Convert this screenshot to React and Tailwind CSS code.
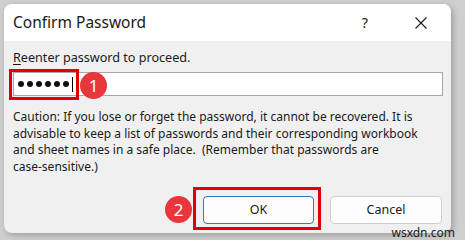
import React from "react";

const font = { fontFamily: '"Noto Sans", "Open Sans", sans-serif' };

const Badge = ({ n, className }) => (
  <div
    className={`absolute w-[27px] h-[27px] rounded-full bg-[#e8363b] text-white flex items-center justify-center text-[17px] leading-none ${className}`}
  >
    {n}
  </div>
);

export default function App() {
  const dots = [0, 1, 2, 3, 4, 5];
  return (
    <div
      className="w-[465px] h-[240px] bg-[#cfcfcf] pt-[4px] pl-[4px] relative overflow-hidden"
      style={font}
    >
      <div className="w-[447px] h-[229px] rounded-[8px] bg-[#f0f0f0] overflow-hidden flex flex-col shadow-[2px_2px_6px_rgba(0,0,0,0.25)]">
        <div className="h-[37px] bg-white flex items-center pl-[9px] pr-[24px] shrink-0">
          <span className="text-[15.5px] text-[#1a1a1a]">Confirm Password</span>
          <span className="ml-auto text-[14.5px] text-[#1a1a1a]">?</span>
          <svg className="ml-[47px]" width="12" height="12" viewBox="0 0 12 12">
            <path d="M0.5 0.5L11.5 11.5M11.5 0.5L0.5 11.5" stroke="#1a1a1a" strokeWidth="1.1" />
          </svg>
        </div>
        <div className="flex flex-col pl-[9px] pr-[8px] pt-[9px] text-[12px] text-[#1a1a1a]">
          <div className="leading-[16px] text-[12.6px]">
            <span className="underline underline-offset-2">R</span>eenter password to proceed.
          </div>
          <div className="mt-[6px] h-[24px] bg-white border border-[#a8a8a8] flex items-center pl-[4px] gap-[3px]">
            {dots.map((d) => (
              <span key={d} className="w-[6px] h-[6px] rounded-full bg-[#111]" />
            ))}
            <span className="w-px h-[15px] bg-black" />
          </div>
          <p className="mt-[13px] leading-[16.5px] pr-[10px]">
            Caution: If you lose or forget the password, it cannot be recovered. It is advisable to keep a list of passwords and their corresponding workbook and sheet names in a safe place.&nbsp; (Remember that passwords are <span className="whitespace-nowrap">case-sensitive.)</span>
          </p>
          <div className="flex justify-end gap-[16px] mt-[21px] pr-[1px]">
            <button className="w-[111px] h-[28px] rounded-[4px] bg-[#fdfdfd] border border-[#2f7bc4] text-[12.5px]">OK</button>
            <button className="w-[112px] h-[28px] rounded-[4px] bg-[#fdfdfd] border border-[#cfcfcf] text-[12.5px]">Cancel</button>
          </div>
        </div>
      </div>

      <div className="absolute left-[9px] top-[69px] w-[70px] h-[31px] border-[3px] border-[#e00000]" />
      <div className="absolute left-[193px] top-[187px] w-[128px] h-[43px] border-[3px] border-[#e00000]" />
      <Badge n="1" className="left-[80px] top-[72px]" />
      <Badge n="2" className="left-[165px] top-[196px]" />

      <div className="absolute right-[10px] bottom-[0px] text-[12px] text-[#222] leading-[14px]">wsxdn.com</div>
    </div>
  );
}
